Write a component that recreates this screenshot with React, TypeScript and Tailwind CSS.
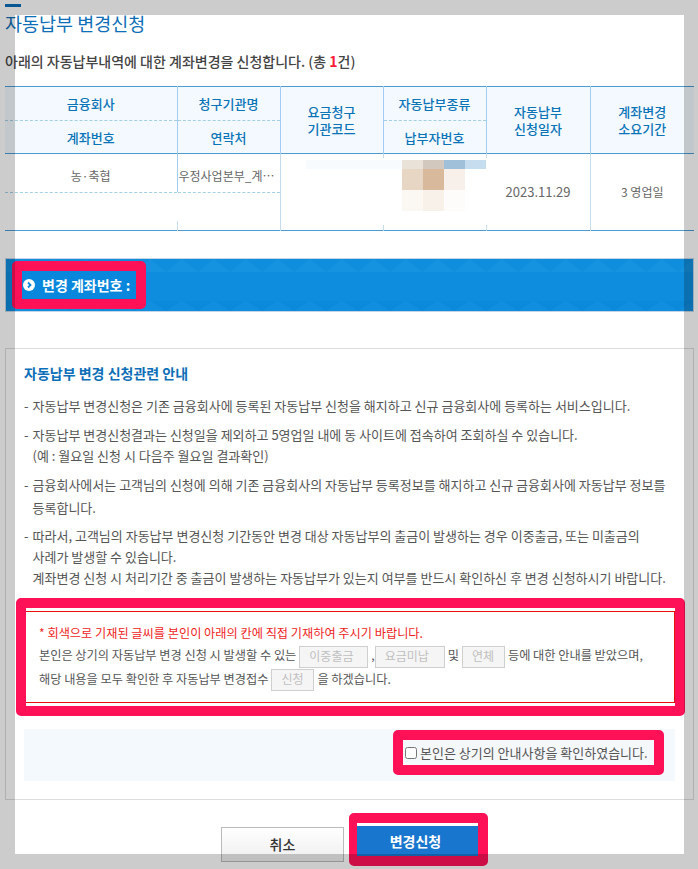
const th = "border-l border-[#a3cdf0] text-center align-middle text-[13px] font-medium text-[#0a74b8] first:border-l-0";

function Mosaic() {
  const rows = [
    { h: "h-[9px]", cells: ["bg-[#e8e2d9]", "bg-[#d2c8bd]", "bg-[#9fc0d8]", "bg-[#c6dcef]"] },
    { h: "h-[21px]", cells: ["bg-[#e8d6c4]", "bg-[#d9b99c]", "bg-[#f7f0ea]", "bg-white"] },
    { h: "h-[21px]", cells: ["bg-[#fbf8f4]", "bg-[#f7f1ea]", "bg-[#fdfcfa]", "bg-white"] },
  ];
  return (
    <div className="absolute left-[301px] top-[74px] w-[180px]">
      <div className="absolute left-0 top-0 h-[9px] w-[96px] bg-[#f8fbfe]" />
      {rows.map((r, i) => (
        <div key={i} className={`flex justify-end ${r.h}`}>
          {r.cells.map((c, j) => (
            <div key={j} className={`w-[21px] ${c}`} />
          ))}
        </div>
      ))}
    </div>
  );
}

function BluePattern() {
  return (
    <svg className="absolute inset-0 h-full w-full" aria-hidden="true">
      <defs>
        <pattern id="tri" width="32" height="52" patternUnits="userSpaceOnUse">
          <path d="M0 0H32V13H0Z" fill="#0f8ede" />
          <path d="M16 0 32 13H0Z" fill="#1592e0" />
          <path d="M0 13H32V42H0Z" fill="#0e8cdd" />
          <path d="M0 42H32V52H0Z" fill="#0b8adc" />
          <path d="M0 52 16 42 32 52Z" fill="#118ede" />
        </pattern>
      </defs>
      <rect width="100%" height="100%" fill="url(#tri)" />
    </svg>
  );
}

function Item({ children }: { children: React.ReactNode }) {
  return (
    <div className="flex gap-[4px]">
      <span>-</span>
      <p>{children}</p>
    </div>
  );
}

function Blank({ text, w }: { text: string; w: string }) {
  return (
    <span className={`mx-[3px] inline-block h-[22px] border border-[#cfcfcf] bg-[#f5f5f5] pl-[9px] align-middle text-[12px] leading-[18px] text-[#c0c0c0] ${w}`}>
      {text}
    </span>
  );
}

export default function App() {
  return (
    <div className="relative h-[869px] w-[698px] overflow-hidden bg-white font-['Noto_Sans_CJK_KR','Liberation_Sans',sans-serif] text-[12px] text-[#555]">
      <div className="absolute left-[5px] top-[4px] h-[3px] w-[16px] bg-[#0d6fb8]" />

      <div className="ml-[5px] w-[689px] pt-[10px]">
        <h1 className="h-[26px] text-[18.5px] leading-[26px] text-[#0d6fb8]">자동납부 변경신청</h1>
        <p className="mt-[15px] h-[20px] text-[14px] font-medium leading-[20px] text-[#444]">
          아래의 자동납부내역에 대한 계좌변경을 신청합니다. (총 <b className="text-[#ff1a3c]">1</b>건)
        </p>

        <div className="relative mt-[15px]">
          <table className="w-[689px] table-fixed border-collapse border-y border-[#4d9bd5]">
            <colgroup>
              <col className="w-[172px]" />
              <col className="w-[103px]" />
              <col className="w-[103px]" />
              <col className="w-[103px]" />
              <col className="w-[104px]" />
              <col className="w-[104px]" />
            </colgroup>
            <thead className="bg-[#f3f9fe] leading-[17px]">
              <tr className="h-[34px] border-b border-dashed border-[#a5cfe6]">
                <th className={th}>금융회사</th>
                <th className={th}>청구기관명</th>
                <th className={th} rowSpan={2}>요금청구<br />기관코드</th>
                <th className={th}>자동납부종류</th>
                <th className={th} rowSpan={2}>자동납부<br />신청일자</th>
                <th className={th} rowSpan={2}>계좌변경<br />소요기간</th>
              </tr>
              <tr className="h-[33px] border-b border-[#4d9bd5]">
                <th className={th}>계좌번호</th>
                <th className={th}>연락처</th>
                <th className={th}>납부자번호</th>
              </tr>
            </thead>
            <tbody className="text-center text-[#666]">
              <tr className="h-[39px]">
                <td className="border-b border-dashed border-[#a5cfe6] pt-[5px]">농·축협</td>
                <td className="whitespace-nowrap border-b border-l border-dashed border-b-[#a5cfe6] border-l-[#a3cdf0] pl-px pt-[5px] text-left [border-left-style:solid]">우정사업본부_계⋯</td>
                <td className="border-l border-[#c5dcec]" rowSpan={2} />
                <td className="border-l border-[#c5dcec]" rowSpan={2} />
                <td className="border-l border-[#c5dcec] text-[13px]" rowSpan={2}>2023.11.29</td>
                <td className="border-l border-[#c5dcec]" rowSpan={2}>3 영업일</td>
              </tr>
              <tr className="h-[38px]">
                <td />
                <td className="border-l border-[#c5dcec]" />
              </tr>
            </tbody>
          </table>
          {/* masked part of the row */}
          <div className="absolute left-[172px] top-[106px] h-[29px] w-[1px] bg-white" />
          <div className="absolute left-[378px] top-[72px] h-[67px] w-[1px] bg-white" />
          <div className="absolute left-[481px] top-[72px] h-[67px] w-[1px] bg-white" />
          <Mosaic />
        </div>

        <div className="relative mt-[27px] flex h-[54px] items-center overflow-hidden border border-[#c5d5e5] bg-[#0a8adc] pl-[6px]">
          <BluePattern />
          <div className="relative rounded-[5px] border-[10px] border-[#ff1158]">
            <div className="flex h-[28px] w-[114px] items-center gap-[7px] bg-[#0887dc] pl-[1px] text-[14px] font-bold text-white">
              <span className="flex h-[12px] w-[12px] items-center justify-center rounded-full bg-white">
                <svg viewBox="0 0 12 12" className="h-[12px] w-[12px]" aria-hidden="true">
                  <path d="M5 3.5 7.5 6 5 8.5" fill="none" stroke="#0887dc" strokeWidth="1.8" />
                </svg>
              </span>
              변경 계좌번호 :
            </div>
          </div>
        </div>

        <section className="mt-[36px] h-[452px] border border-[#dddddd] pl-[18px] pt-[14px]">
          <h2 className="h-[21px] text-[14px] font-bold leading-[21px] text-[#0d6fb8]">자동납부 변경 신청관련 안내</h2>
          <div className="mt-[11px] flex flex-col gap-[8px] text-[13px] leading-[21px]">
            <Item>자동납부 변경신청은 기존 금융회사에 등록된 자동납부 신청을 해지하고 신규 금융회사에 등록하는 서비스입니다.</Item>
            <Item>
              자동납부 변경신청결과는 신청일을 제외하고 5영업일 내에 동 사이트에 접속하여 조회하실 수 있습니다.
              <br />
              (예 : 월요일 신청 시 다음주 월요일 결과확인)
            </Item>
            <Item>
              금융회사에서는 고객님의 신청에 의해 기존 금융회사의 자동납부 등록정보를 해지하고 신규 금융회사에 자동납부 정보를
              <span className="-mb-[1px] mt-[2px] block">등록합니다.</span>
            </Item>
            <Item>
              따라서, 고객님의 자동납부 변경신청 기간동안 변경 대상 자동납부의 출금이 발생하는 경우 이중출금, 또는 미출금의
              <br />
              사례가 발생할 수 있습니다.
              <br />
              계좌변경 신청 시 처리기간 중 출금이 발생하는 자동납부가 있는지 여부를 반드시 확인하신 후 변경 신청하시기 바랍니다.
            </Item>
          </div>

          <div className="-ml-[8px] mt-[10px] w-[669px] rounded-[5px] border-[10px] border-[#ff1158]">
            <div className="my-[3px] h-[92px] border-y border-r border-[#e8100c] bg-white pl-[13px] pt-[10px] text-[12.2px] leading-[22px]">
              <p className="text-[#f01c1c]">* 회색으로 기재된 글씨를 본인이 아래의 칸에 직접 기재하여 주시기 바랍니다.</p>
              <p>
                본인은 상기의 자동납부 변경 신청 시 발생할 수 있는
                <Blank text="이중출금" w="w-[69px]" />
                <span className="-mr-[3px]">,</span>
                <Blank text="요금미납" w="w-[70px]" />
                및
                <Blank text="연체" w="w-[43px]" />
                등에 대한 안내를 받았으며,
              </p>
              <p>
                해당 내용을 모두 확인한 후 자동납부 변경접수
                <Blank text="신청" w="w-[43px]" />
                을 하겠습니다.
              </p>
            </div>
          </div>

          <div className="mt-[13px] flex h-[52px] w-[651px] items-start justify-end bg-[#f3f9fc] pr-[11px] pt-[1px]">
            <div className="rounded-[5px] border-[10px] border-[#ff1158]">
              <label className="flex h-[25px] w-[251px] items-center gap-[3px] bg-[#f5f8fb] pl-[2px] text-[13px] text-[#555]">
                <input type="checkbox" className="h-[12px] w-[12px]" />
                본인은 상기의 안내사항을 확인하였습니다.
              </label>
            </div>
          </div>
        </section>

        <div className="ml-[216px] mt-[13px] flex items-start gap-[5px]">
          <button type="button" className="mt-[14px] h-[35px] w-[123px] border border-[#bbbbbb] bg-gradient-to-b from-white to-[#eeeeee] text-[14px] font-medium text-[#333]">
            취소
          </button>
          <div className="rounded-[5px] border-y-[10px] border-l-[8px] border-r-[10px] border-[#ff1158]">
            <button type="button" className="h-[33px] w-[121px] border-t-[3px] border-white bg-[#1976cf] pr-[4px] text-[14px] font-bold text-white">
              변경신청
            </button>
          </div>
        </div>
      </div>

      {/* dimmed frame over the page */}
      <div className="pointer-events-none absolute inset-x-0 top-0 h-[15px] bg-black/20" />
      <div className="pointer-events-none absolute inset-x-0 bottom-0 h-[15px] bg-black/20" />
      <div className="pointer-events-none absolute bottom-[15px] left-0 top-[15px] w-[15px] bg-black/20" />
      <div className="pointer-events-none absolute bottom-[15px] right-0 top-[15px] w-[14px] bg-black/20" />
    </div>
  );
}
